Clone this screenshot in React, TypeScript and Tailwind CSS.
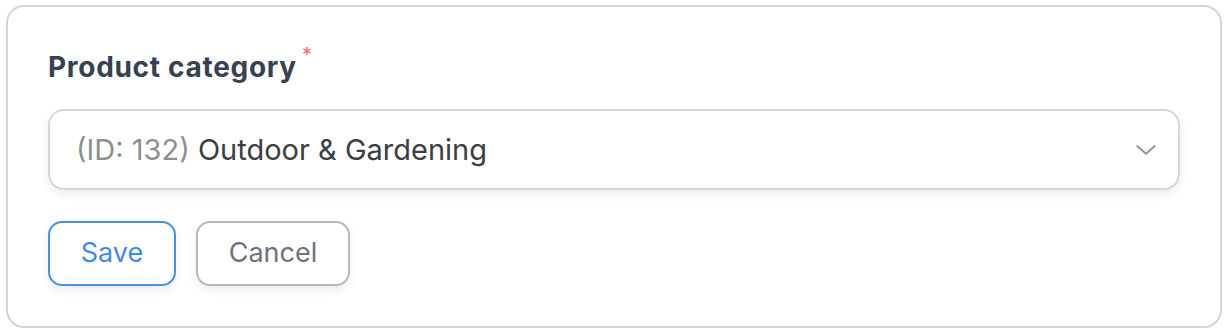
export default function App() {
  return (
    <div className="bg-white w-[1228px] h-[334px] pt-[5px] pl-[6px] font-['Inter',sans-serif]">
      <div className="w-[1216px] h-[323px] rounded-[18px] border-2 border-[#d4d4d4] bg-white px-[40px] pt-[40px]">
        <label className="flex items-start text-[28px] leading-[40px] font-bold tracking-[0.7px] text-[#374151]">
          Product category
          <span className="ml-[5px] -mt-[2px] text-[20px] leading-none text-[#f07070] font-normal">*</span>
        </label>

        <div className="mt-[22px] h-[81px] rounded-[16px] border-2 border-[#d6d6d6] bg-white shadow-[0_4px_10px_rgba(0,0,0,0.08)] flex items-center justify-between pl-[26px] pr-[22px]">
          <span className="text-[29px] text-[#3a3d42]">
            <span className="text-[#8e8e8e]">(ID: 132)</span> Outdoor &amp; Gardening
          </span>
          <svg width="20" height="10" viewBox="0 0 20 10" fill="none" className="text-[#9a9a9a]">
            <path d="M1.5 1.2 L10 8.8 L18.5 1.2" stroke="currentColor" strokeWidth="2.2" strokeLinecap="round" strokeLinejoin="round" />
          </svg>
        </div>

        <div className="mt-[31px] flex gap-[20px]">
          <button className="w-[128px] h-[65px] rounded-[14px] border-2 border-[#4a90e2] bg-white text-[27px] text-[#3f8be0] shadow-[0_4px_10px_rgba(0,0,0,0.08)]">
            Save
          </button>
          <button className="w-[154px] h-[65px] rounded-[14px] border-2 border-[#b8b8b8] bg-white text-[27px] text-[#6b7280] shadow-[0_4px_10px_rgba(0,0,0,0.08)]">
            Cancel
          </button>
        </div>
      </div>
    </div>
  );
}
